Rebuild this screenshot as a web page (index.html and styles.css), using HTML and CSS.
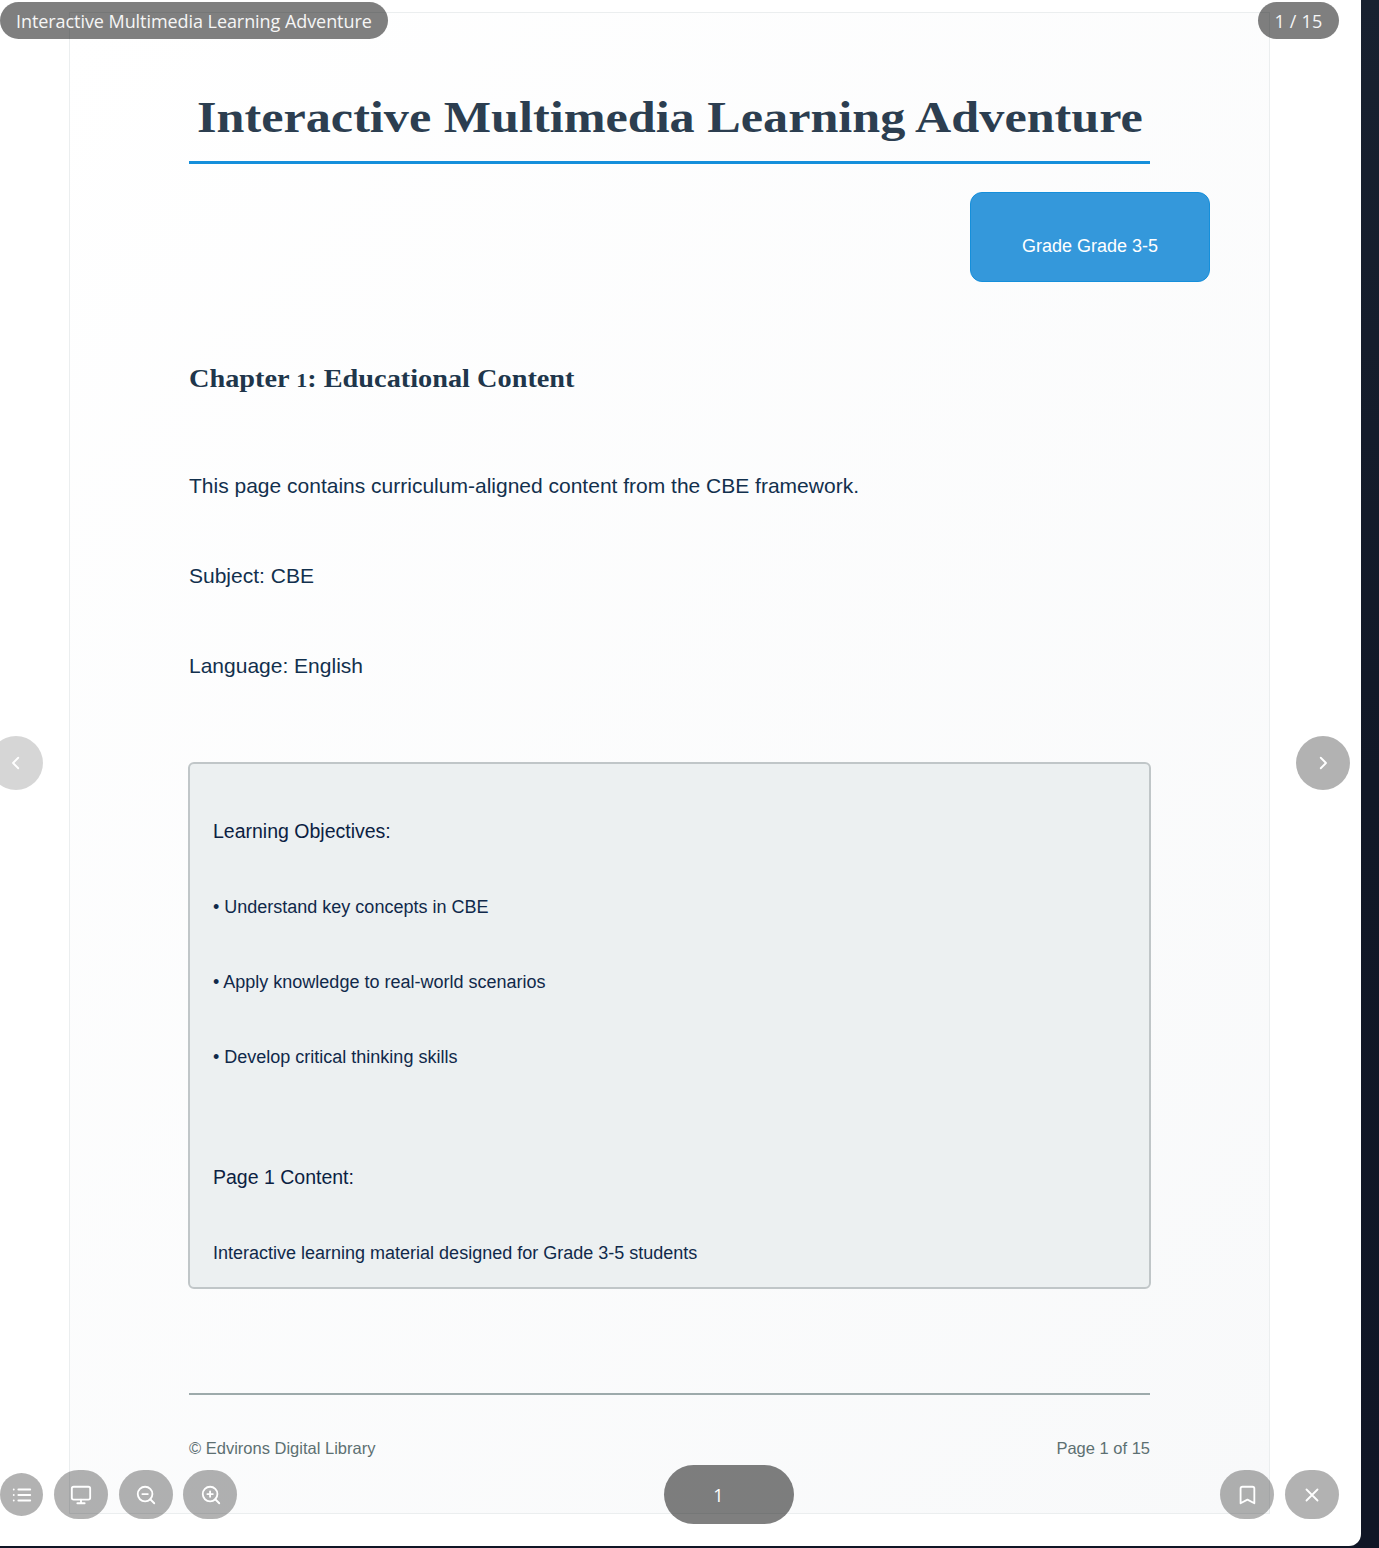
FILE: index.html
```html
<!DOCTYPE html>
<html lang="en">
<head>
<meta charset="utf-8">
<title>Interactive Multimedia Learning Adventure</title>
<link rel="stylesheet" href="styles.css">
</head>
<body>
<div class="reader">
  <article class="page">
    <header class="page-header"><h1>Interactive Multimedia Learning Adventure</h1></header>
    <div class="grade">Grade Grade 3-5</div>
    <h2>Chapter <span class="numeral">1</span>: Educational Content</h2>
    <div class="intro">
      <p>This page contains curriculum-aligned content from the CBE framework.</p>
      <p>Subject: CBE</p>
      <p>Language: English</p>
    </div>
    <section class="objectives">
      <h3>Learning Objectives:</h3>
      <p>• Understand key concepts in CBE</p>
      <p>• Apply knowledge to real-world scenarios</p>
      <p>• Develop critical thinking skills</p>
      <h3 class="content-title">Page 1 Content:</h3>
      <p>Interactive learning material designed for Grade 3-5 students</p>
    </section>
    <footer class="page-footer"><span>© Edvirons Digital Library</span><span>Page 1 of 15</span></footer>
  </article>

  <div class="overlay top-bar">
    <span class="pill book-title">Interactive Multimedia Learning Adventure</span>
    <span class="pill counter">1 / 15</span>
  </div>
  <button class="overlay nav prev" aria-label="Previous"><svg width="20" height="20" viewBox="0 0 24 24"><path d="M15 19l-7-7 7-7"/></svg></button>
  <button class="overlay nav next" aria-label="Next"><svg width="20" height="20" viewBox="0 0 24 24"><path d="M9 19l7-7-7-7"/></svg></button>
  <div class="overlay toolbar">
    <button class="tool round" aria-label="Contents"><svg width="22" height="22" viewBox="0 0 24 24"><path d="M8 6h13M8 12h13M8 18h13M3 6h.01M3 12h.01M3 18h.01"/></svg></button>
    <button class="tool" aria-label="Present"><svg width="22" height="22" viewBox="0 0 24 24"><rect x="2" y="3" width="20" height="14" rx="2"/><path d="M8 21h8M12 17v4"/></svg></button>
    <button class="tool" aria-label="Zoom out"><svg width="22" height="22" viewBox="0 0 24 24"><circle cx="11" cy="11" r="8"/><path d="M21 21l-4.35-4.35M8 11h6"/></svg></button>
    <button class="tool zoom-in" aria-label="Zoom in"><svg width="22" height="22" viewBox="0 0 24 24"><circle cx="11" cy="11" r="8"/><path d="M21 21l-4.35-4.35M8 11h6M11 8v6"/></svg></button>
    <div class="page-input">1</div>
    <button class="tool bookmark" aria-label="Bookmark"><svg width="22" height="22" viewBox="0 0 24 24"><path d="M20 21l-7.5-4L5 21V5a2 2 0 0 1 2-2h11a2 2 0 0 1 2 2z"/></svg></button>
    <button class="tool" aria-label="Close"><svg width="22" height="22" viewBox="0 0 24 24"><path d="M18 6L6 18M6 6l12 12"/></svg></button>
  </div>
</div>
</body>
</html>
```
FILE: styles.css
```css
* { box-sizing: border-box; }
body { margin: 0; height: 1548px; overflow: hidden; background: linear-gradient(#182130, #111827 50%, #101626); font-family: Arial, "Liberation Sans", sans-serif; }
h1, h2, h3, p { margin: 0; font-weight: 400; white-space: nowrap; }
button { border: 0; padding: 0; }
.reader { position: relative; width: 1361px; height: 1546px; padding: 12px 0 0 69px; background: #fff; border-radius: 0 0 12px 0; }
.page { width: 1201px; height: 1502px; padding: 0 119px; border: 1px solid #ebeeef; background: linear-gradient(135deg, #fff, #f8f9fa); color: #12304d; display: flex; flex-direction: column; }
.page-header { height: 151px; padding-top: 75px; border-bottom: 3px solid #158fdb; }
h1 { width: max-content; margin-left: 8px; font: 700 44px/60px "Liberation Serif", serif; color: #2c3e50; transform: scaleX(1.141); transform-origin: 0 50%; }
.grade { align-self: flex-end; margin: 28px -60px 0 0; width: 240px; height: 90px; padding-top: 16px; border: 1.5px solid #158fdb; border-radius: 12px; background: #3498db; color: #fff; font-size: 18px; line-height: 75px; text-align: center; }
h2 { width: max-content; margin-top: 77px; font: 700 25px/40px "Liberation Serif", serif; color: #20364b; transform: scaleX(1.132); transform-origin: 0 50%; }
.numeral { font-size: 19.5px; line-height: 1; }
.intro { margin-top: 42px; font-size: 21px; line-height: 90px; }
.objectives { margin: 51px -1px 0; height: 527px; padding: 29px 23px 0; border: 2px solid #c0c6c8; border-radius: 6px; background: #ecf0f1; font-size: 18px; line-height: 75px; color: #10294a; }
.objectives h3 { font-size: 19.5px; line-height: 77px; color: #0b2142; }
.objectives .content-title { margin-top: 44px; }
.page-footer { margin-top: 104px; padding-top: 41px; border-top: 2px solid #9daaab; display: flex; justify-content: space-between; font-size: 16.5px; line-height: 24px; color: #5d7072; }
.overlay { position: absolute; }
.top-bar { top: 2px; left: 0; right: 22px; display: flex; justify-content: space-between; }
.pill { height: 37px; padding: 0 16px; border-radius: 18.5px; background: rgba(0,0,0,.5); color: #f6f6f6; font: 18px/38px "Open Sans", "Noto Sans", sans-serif; white-space: nowrap; }
.book-title { width: 388px; letter-spacing: -.065px; }
.counter { width: 81px; text-align: center; padding: 0; letter-spacing: .2px; }
.nav { top: 736px; width: 54px; height: 54px; border-radius: 50%; background: rgba(0,0,0,.3); display: flex; align-items: center; justify-content: center; }
.prev { left: -11px; background: rgba(0,0,0,.16); }
.next { left: 1296px; }
svg { display: block; fill: none; stroke: #fff; stroke-width: 2; stroke-linecap: round; stroke-linejoin: round; }
.nav svg { width: 18px; height: 18px; stroke-width: 2.4; }
.toolbar { top: 1465px; left: 0; right: 22px; height: 59px; display: flex; align-items: center; gap: 11px; }
.tool { width: 54px; height: 49px; border-radius: 24.5px; background: rgba(0,0,0,.3); display: flex; align-items: center; justify-content: center; }
.tool.round { width: 43px; height: 43px; }
.zoom-in { margin-left: -1px; padding-left: 2px; }
.page-input { width: 130px; height: 59px; margin-left: 416px; padding-right: 21px; border-radius: 29.5px; background: rgba(0,0,0,.5); color: #fff; font: 18px/61px "Open Sans", sans-serif; text-align: center; }
.bookmark { margin-left: auto; }
```
